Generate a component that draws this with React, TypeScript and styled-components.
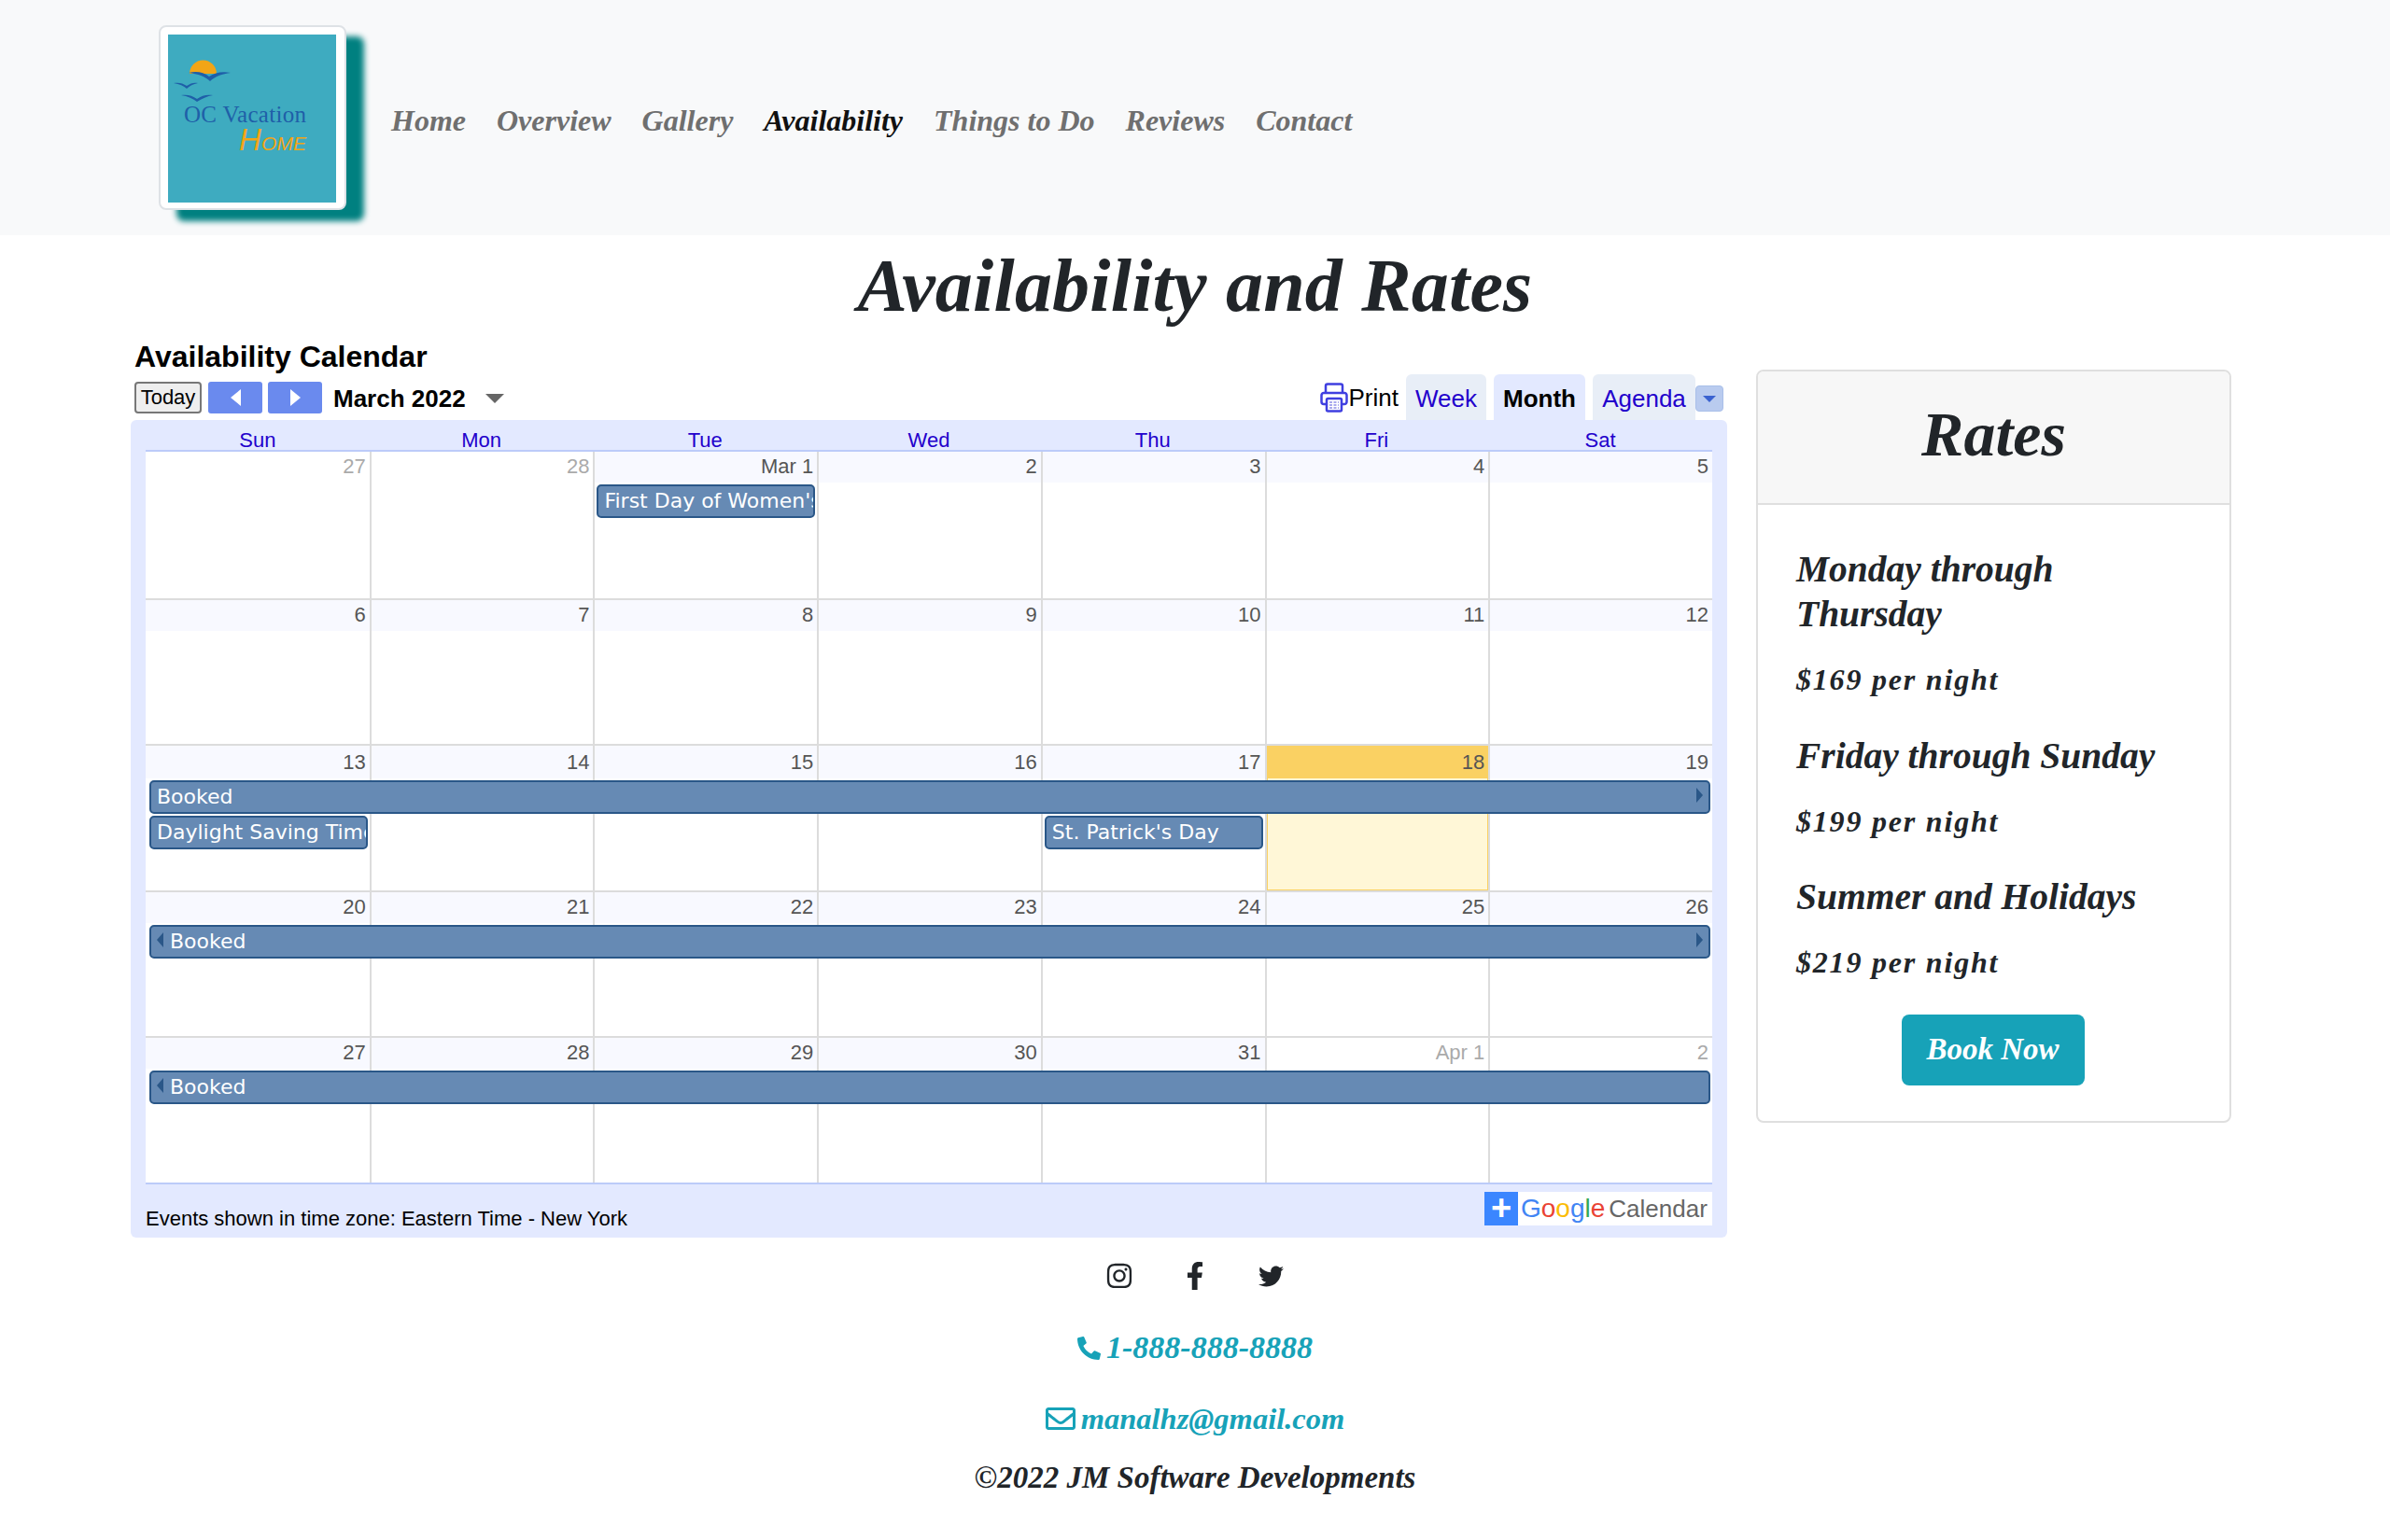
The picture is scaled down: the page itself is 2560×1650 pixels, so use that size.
import React from "react";
import styled, { createGlobalStyle } from "styled-components";
import { FaFacebookF, FaInstagram, FaPhoneAlt, FaRegEnvelope, FaTwitter } from "react-icons/fa";

const scriptFont = `"Liberation Serif", "Times New Roman", serif`;
const calFont = `"Liberation Sans", Arial, sans-serif`;

const GlobalStyle = createGlobalStyle`
  html, body { margin: 0; padding: 0; background: #fff; }
  body { font-family: ${scriptFont}; color: #212529; }
  * { box-sizing: border-box; }
`;

const Navbar = styled.nav`
  height: 252px;
  background: #f8f9fa;
  display: flex;
  align-items: center;
  padding: 0 0 0 170px;
  gap: 48px;
`;

const LogoFrame = styled.div`
  width: 201px;
  height: 198px;
  margin-top: -1px;
  padding: 8px 8px;
  background: #fff;
  border: 2px solid #dee2e6;
  border-radius: 8px;
  box-shadow: 19px 12px 6px #008080;
`;

const NavLinks = styled.div`
  display: flex;
  gap: 33px;
  margin-top: 7px;
`;

const NavLink = styled.a<{ $active?: boolean }>`
  font: italic 700 32px ${scriptFont};
  color: ${(p) => (p.$active ? "#111" : "#6f6f6f")};
`;

const Title = styled.h1`
  margin: 0;
  height: 108px;
  text-align: center;
  font: italic 700 80px/108px ${scriptFont};
  letter-spacing: 0.2px;
  color: #212529;
`;

const Content = styled.div`
  display: flex;
  align-items: flex-start;
  padding-left: 140px;
  gap: 31px;
`;

const CalendarColumn = styled.section`
  width: 1710px;
`;

const CalendarTitle = styled.div`
  height: 49px;
  padding: 2px 0 0 4px;
  font: 700 32px/40px ${calFont};
  color: #000;
`;

const Toolbar = styled.div`
  display: flex;
  align-items: flex-start;
  height: 41px;
  padding-left: 4px;
`;

const TodayButton = styled.button`
  width: 72px;
  height: 34px;
  padding: 0;
  background: #eee;
  border: 2px solid #777;
  border-radius: 4px;
  font: 22px ${calFont};
  color: #000;
`;

const NavArrow = styled.button<{ $left?: boolean }>`
  width: 58px;
  height: 34px;
  margin-left: ${(p) => (p.$left ? "7px" : "6px")};
  padding: 0;
  border: 0;
  border-radius: 3px;
  background: #6a8aee;
  display: flex;
  align-items: center;
  justify-content: center;

  &::before {
    content: "";
    border-style: solid;
    border-width: 9px ${(p) => (p.$left ? "11px 9px 0" : "0 9px 11px")};
    border-color: transparent ${(p) => (p.$left ? "#fff" : "transparent")} transparent ${(p) => (p.$left ? "transparent" : "#fff")};
  }
`;

const MonthLabel = styled.div`
  margin-left: 12px;
  font: 700 26px/36px ${calFont};
  color: #000;
`;

const MonthCaret = styled.span`
  width: 0;
  height: 0;
  margin: 13px 0 0 21px;
  border-style: solid;
  border-width: 10px 10px 0;
  border-color: #666 transparent transparent;
`;

const ToolbarRight = styled.div`
  margin-left: auto;
  display: flex;
  align-items: flex-start;
  margin-top: -8px;
  height: 49px;
  padding-right: 4px;
`;

const PrintLink = styled.div`
  display: flex;
  align-items: center;
  gap: 1px;
  margin: 9px 8px 0 0;
  font: 26px/30px ${calFont};
  color: #000;
`;

const ViewTab = styled.div<{ $active?: boolean; $width: number }>`
  width: ${(p) => p.$width}px;
  height: 49px;
  margin-left: ${(p) => (p.$active ? "8px" : "0")};
  margin-right: ${(p) => (p.$active ? "8px" : "0")};
  border-radius: 6px 6px 0 0;
  background: ${(p) => (p.$active ? "#e3e9ff" : "#e8eef7")};
  color: ${(p) => (p.$active ? "#000" : "#2200cc")};
  font: ${(p) => (p.$active ? 700 : 400)} 26px/52px ${calFont};
  text-align: center;
`;

const ViewDropdown = styled.div`
  width: 30px;
  height: 28px;
  margin-top: 12px;
  border-radius: 4px;
  background: #b9cbef;
  border: 1px solid #a9bfe9;
  display: flex;
  align-items: center;
  justify-content: center;

  &::before {
    content: "";
    border-style: solid;
    border-width: 7px 7px 0;
    border-color: #3a62d0 transparent transparent;
  }
`;

const CalendarPanel = styled.div`
  height: 876px;
  padding: 0 16px;
  background: #e3e9ff;
  border-radius: 6px;
`;

const DayNames = styled.div`
  display: grid;
  grid-template-columns: repeat(7, 1fr);
  height: 32px;
  padding-top: 9px;
`;

const DayName = styled.div`
  text-align: center;
  font: 22px/26px ${calFont};
  color: #2200cc;
`;

// --label is the height of the date strip, one week runs a little taller
const Week = styled.div<{ $first?: boolean; $label: number }>`
  --label: ${(p) => p.$label}px;
  display: grid;
  grid-template-columns: repeat(7, 1fr);
  grid-template-rows: var(--label) 38px 38px 1fr;
  height: ${(p) => (p.$first ? "159px" : "156.4px")};
  background: #fff;
  border-top: 2px solid ${(p) => (p.$first ? "#bccbf9" : "#dcdcdc")};
`;

const DayCell = styled.div<{ $col: number; $today?: boolean }>`
  grid-column: ${(p) => p.$col};
  grid-row: 1 / -1;
  border-left: ${(p) => (p.$col > 1 ? "2px solid #dcdcdc" : "0")};
  background: ${(p) => (p.$today ? "#fff7d7" : "#fff")};
  box-shadow: ${(p) => (p.$today ? "inset 0 0 0 1px #fad163" : "none")};
`;

const DateLabel = styled.div<{ $muted?: boolean; $today?: boolean }>`
  height: var(--label);
  padding: calc(var(--label) - 31px) 4px 0 0;
  text-align: right;
  font: 22px/28px ${calFont};
  color: ${(p) => (p.$muted ? "#aaa" : "#555")};
  background: ${(p) => (p.$today ? "#fad163" : p.$muted ? "#fff" : "#f8f9ff")};
`;

const EventBar = styled.div<{ $start: number; $span: number; $row: number; $right?: boolean }>`
  grid-column: ${(p) => p.$start} / span ${(p) => p.$span};
  grid-row: ${(p) => p.$row};
  z-index: 1;
  height: 36px;
  margin: 2px 2px 0 4px;
  padding: 0 ${(p) => (p.$right ? "6px" : "0")} 0 6px;
  display: flex;
  align-items: center;
  gap: 7px;
  overflow: hidden;
  white-space: nowrap;
  background: #668ab4;
  border: 2px solid #2a5788;
  border-radius: 5px;
  color: #fff;
  font: 22px/30px "DejaVu Sans", Verdana, sans-serif;
`;

const EventText = styled.span`
  flex: 1;
  overflow: hidden;
`;

const EventArrow = styled.span<{ $right?: boolean }>`
  flex: none;
  margin-top: -4px;
  border-style: solid;
  border-width: ${(p) => (p.$right ? "8px 0 8px 7px" : "8px 7px 8px 0")};
  border-color: transparent ${(p) => (p.$right ? "transparent" : "#2a5788")} transparent ${(p) => (p.$right ? "#2a5788" : "transparent")};
`;

const CalendarFooter = styled.div`
  display: flex;
  justify-content: space-between;
  border-top: 2px solid #bccbf9;
  padding-top: 8px;
`;

const TimeZone = styled.div`
  margin-top: 15px;
  font: 22px/28px ${calFont};
  color: #000;
`;

const GoogleBadge = styled.div`
  width: 244px;
  height: 36px;
  background: #fff;
  display: flex;
  align-items: center;
  font: 26px/36px ${calFont};
  color: #666;
`;

const PlusBox = styled.span`
  width: 36px;
  height: 36px;
  margin-right: 3px;
  background: #3b86ff;
  color: #fff;
  font: 700 38px/34px ${calFont};
  text-align: center;
`;

const GoogleWord = styled.span`
  margin-right: 4px;
  font-size: 28px;
`;

const Letter = styled.span<{ $color: string }>`
  color: ${(p) => p.$color};
`;

const RatesCard = styled.aside`
  width: 509px;
  height: 807px;
  margin-top: 36px;
  background: #fff;
  border: 2px solid #dfdfdf;
  border-radius: 8px;
  overflow: hidden;
`;

const RatesHeader = styled.div`
  height: 143px;
  background: #f7f7f7;
  border-bottom: 2px solid #dfdfdf;
  text-align: center;
  font: italic 700 68px/134px ${scriptFont};
  color: #212529;
`;

const RatesBody = styled.div`
  padding: 45px 40px 0 41px;
  display: flex;
  flex-direction: column;
`;

const RateName = styled.h4`
  margin: 0 0 25px;
  font: italic 700 39.5px/48px ${scriptFont};
  color: #212529;
`;

const RatePrice = styled.p`
  margin: 0 0 36.5px;
  font: italic 700 32px/42px ${scriptFont};
  letter-spacing: 1.8px;
  color: #212529;
`;

const BookButton = styled.button`
  align-self: center;
  width: 196px;
  height: 76px;
  margin: -2px 0 0 -3px;
  border: 0;
  border-radius: 8px;
  background: #17a2b8;
  color: #fff;
  font: italic 700 33px ${scriptFont};
`;

const Footer = styled.footer`
  display: flex;
  flex-direction: column;
  align-items: center;
  padding-top: 26px;
`;

const Socials = styled.div`
  display: grid;
  grid-template-columns: repeat(3, 81px);
  justify-items: center;
  align-items: center;
  height: 30px;
  font-size: 30px;
  color: #212529;
`;

const ContactLine = styled.a<{ $size: number; $top: number }>`
  display: flex;
  align-items: center;
  gap: 6px;
  height: 44px;
  margin-top: ${(p) => p.$top}px;
  font: italic 700 ${(p) => p.$size}px/44px ${scriptFont};
  color: #17a2b8;
`;

const Copyright = styled.p`
  margin: 20px 0 0;
  font: italic 700 33px/42px ${scriptFont};
  color: #212529;
`;

const LogoArt = () => (
  <svg width="180" height="180" viewBox="0 0 180 180" role="img">
    <rect width="180" height="180" fill="#3eabc0" />
    <path d="M23 42a14.500 14.500 0 0 1 29 0z" fill="#f2a516" />
    <path d="M22 41c8-2 16-1 22 4 6-4 14-6 23-4-9 1-17 4-22 9-5-5-13-8-23-9z" fill="#1f5fa8" />
    <path d="M6 52c5-1 10 0 14 3 4-3 8-4 12-3-5 1-9 3-12 6-3-3-8-5-14-6z" fill="#1f5fa8" />
    <path d="M14 65c6-1 12 0 17 4 5-4 11-5 17-4-6 1-12 4-17 7-4-3-10-6-17-7z" fill="#1f5fa8" />
    <text x="17" y="94" fontFamily="'Liberation Serif', serif" fontSize="25" fill="#1f5fa8" textLength="131">OC Vacation</text>
    <text x="76" y="124" fontFamily="'Liberation Sans', sans-serif" fontStyle="italic" fill="#f2a516" textLength="72">
      <tspan fontSize="33">H</tspan>
      <tspan fontSize="21">OME</tspan>
    </text>
  </svg>
);

const PrintIcon = () => (
  <svg width="30" height="32" viewBox="0 0 30 32" fill="none" stroke="#3f3fe0" strokeWidth="2.500">
    <path d="M6 11V3.500a2 2 0 0 1 2-2h14a2 2 0 0 1 2 2V11" />
    <path d="M6 23H4a2.500 2.500 0 0 1-2.500-2.500v-7A2.500 2.500 0 0 1 4 11h22a2.500 2.500 0 0 1 2.500 2.500v7A2.500 2.500 0 0 1 26 23h-2" />
    <rect x="7" y="17" width="16" height="13.500" rx="1.500" />
    <path d="M10 21h10M10 24h10M10 27h10" stroke="#a9a9ee" strokeWidth="2" strokeDasharray="3 1.500" />
  </svg>
);

type Day = { label: string; muted?: boolean; today?: boolean };
type Bar = { text?: string; start: number; span: number; row: number; left?: boolean; right?: boolean };

const nums = (from: number, to: number): Day[] =>
  Array.from({ length: to - from + 1 }, (_, i) => ({ label: String(from + i) }));

const weeks: { days: Day[]; bars: Bar[]; label?: number }[] = [
  {
    days: [
      { label: "27", muted: true },
      { label: "28", muted: true },
      { label: "Mar 1" },
      ...nums(2, 5),
    ],
    bars: [{ text: "First Day of Women's History Month", start: 3, span: 1, row: 2 }],
  },
  { days: nums(6, 12), bars: [] },
  {
    days: nums(13, 19).map((d) => (d.label === "18" ? { ...d, today: true } : d)),
    label: 35,
    bars: [
      { text: "Booked", start: 1, span: 7, row: 2, right: true },
      { text: "Daylight Saving Time starts", start: 1, span: 1, row: 3 },
      { text: "St. Patrick's Day", start: 5, span: 1, row: 3 },
    ],
  },
  { days: nums(20, 26), bars: [{ text: "Booked", start: 1, span: 7, row: 2, left: true, right: true }] },
  {
    days: [...nums(27, 31), { label: "Apr 1", muted: true }, { label: "2", muted: true }],
    bars: [{ text: "Booked", start: 1, span: 7, row: 2, left: true }],
  },
];

const dayNames = ["Sun", "Mon", "Tue", "Wed", "Thu", "Fri", "Sat"];

const rates = [
  { name: "Monday through Thursday", price: "$169 per night" },
  { name: "Friday through Sunday", price: "$199 per night" },
  { name: "Summer and Holidays", price: "$219 per night" },
];

const navItems = ["Home", "Overview", "Gallery", "Availability", "Things to Do", "Reviews", "Contact"];

const App: React.FC = () => {
  return (
    <>
      <GlobalStyle />
      <Navbar>
        <LogoFrame>
          <LogoArt />
        </LogoFrame>
        <NavLinks>
          {navItems.map((item) => (
            <NavLink key={item} $active={item === "Availability"}>
              {item}
            </NavLink>
          ))}
        </NavLinks>
      </Navbar>

      <Title>Availability and Rates</Title>

      <Content>
        <CalendarColumn>
          <CalendarTitle>Availability Calendar</CalendarTitle>
          <Toolbar>
            <TodayButton>Today</TodayButton>
            <NavArrow $left />
            <NavArrow />
            <MonthLabel>March 2022</MonthLabel>
            <MonthCaret />
            <ToolbarRight>
              <PrintLink>
                <PrintIcon />
                Print
              </PrintLink>
              <ViewTab $width={86}>Week</ViewTab>
              <ViewTab $active $width={98}>Month</ViewTab>
              <ViewTab $width={110}>Agenda</ViewTab>
              <ViewDropdown />
            </ToolbarRight>
          </Toolbar>

          <CalendarPanel>
            <DayNames>
              {dayNames.map((d) => (
                <DayName key={d}>{d}</DayName>
              ))}
            </DayNames>
            {weeks.map((week, w) => (
              <Week key={w} $first={w === 0} $label={week.label ?? 33}>
                {week.days.map((day, i) => (
                  <DayCell key={day.label} $col={i + 1} $today={day.today}>
                    <DateLabel $muted={day.muted} $today={day.today}>
                      {day.label}
                    </DateLabel>
                  </DayCell>
                ))}
                {week.bars.map((bar) => (
                  <EventBar key={`${bar.text}${bar.start}`} $start={bar.start} $span={bar.span} $row={bar.row} $right={bar.right}>
                    {bar.left && <EventArrow />}
                    <EventText>{bar.text}</EventText>
                    {bar.right && <EventArrow $right />}
                  </EventBar>
                ))}
              </Week>
            ))}
            <CalendarFooter>
              <TimeZone>Events shown in time zone: Eastern Time - New York</TimeZone>
              <GoogleBadge>
                <PlusBox>+</PlusBox>
                <GoogleWord>
                  <Letter $color="#4285f4">G</Letter>
                  <Letter $color="#ea4335">o</Letter>
                  <Letter $color="#fbbc05">o</Letter>
                  <Letter $color="#4285f4">g</Letter>
                  <Letter $color="#34a853">l</Letter>
                  <Letter $color="#ea4335">e</Letter>
                </GoogleWord>
                Calendar
              </GoogleBadge>
            </CalendarFooter>
          </CalendarPanel>
        </CalendarColumn>

        <RatesCard>
          <RatesHeader>Rates</RatesHeader>
          <RatesBody>
            {rates.map((r) => (
              <React.Fragment key={r.name}>
                <RateName>{r.name}</RateName>
                <RatePrice>{r.price}</RatePrice>
              </React.Fragment>
            ))}
            <BookButton>Book Now</BookButton>
          </RatesBody>
        </RatesCard>
      </Content>

      <Footer>
        <Socials>
          <FaInstagram />
          <FaFacebookF />
          <FaTwitter size={27} />
        </Socials>
        <ContactLine $size={34} $top={40}>
          <FaPhoneAlt size={25} />
          1-888-888-8888
        </ContactLine>
        <ContactLine $size={32.500} $top={32}>
          <FaRegEnvelope size={32} />
          manalhz@gmail.com
        </ContactLine>
        <Copyright>©2022 JM Software Developments</Copyright>
      </Footer>
    </>
  );
};

export default App;
